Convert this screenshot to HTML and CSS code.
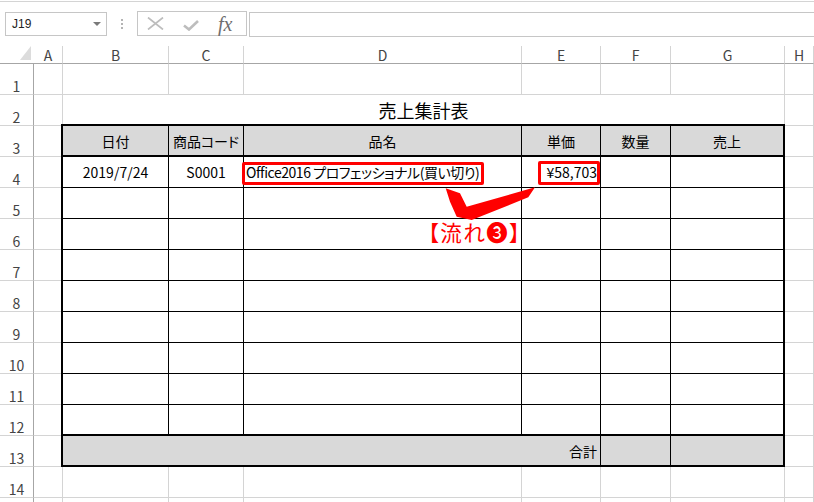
FILE: index.html
```html
<!DOCTYPE html>
<html lang="ja">
<head>
<meta charset="utf-8">
<title>売上集計表</title>
<link rel="stylesheet" href="styles.css">
</head>
<body>
<div class="fbar">
  <div class="namebox"><span class="nb-text">J19</span><span class="nb-arrow"></span></div>
  <div class="grip"><i></i><i></i><i></i></div>
  <div class="fnbox">
    <svg class="ic-x" width="17" height="13" viewBox="0 0 17 13"><path d="M1 0.5L16 12.5M16 0.5L1 12.5" stroke="#bdbdbd" stroke-width="1.7" fill="none"/></svg>
    <svg class="ic-ok" width="16" height="11" viewBox="0 0 16 11"><path d="M1 5.5L6 9.5L15 1" stroke="#bdbdbd" stroke-width="2.6" fill="none"/></svg>
    <span class="fx">fx</span>
  </div>
  <div class="finput"></div>
</div>

<div class="sheet">
  <div class="ch corner"><svg width="33" height="17" viewBox="0 0 33 17"><polygon points="31,0 31,14 20,14" fill="#dcdcdc"/></svg></div>
  <div class="ch">A</div><div class="ch">B</div><div class="ch">C</div><div class="ch">D</div><div class="ch">E</div><div class="ch">F</div><div class="ch">G</div><div class="ch">H</div>

  <div class="rh">1</div><div class="c"></div><div class="c"></div><div class="c"></div><div class="c"></div><div class="c"></div><div class="c"></div><div class="c"></div><div class="c"></div>
  <div class="rh">2</div><div class="c"></div><div class="c"></div>
  <div class="rh">3</div><div class="c"></div><div class="c"></div>
  <div class="rh">4</div><div class="c"></div><div class="c"></div>
  <div class="rh">5</div><div class="c"></div><div class="c"></div>
  <div class="rh">6</div><div class="c"></div><div class="c"></div>
  <div class="rh">7</div><div class="c"></div><div class="c"></div>
  <div class="rh">8</div><div class="c"></div><div class="c"></div>
  <div class="rh">9</div><div class="c"></div><div class="c"></div>
  <div class="rh">10</div><div class="c"></div><div class="c"></div>
  <div class="rh">11</div><div class="c"></div><div class="c"></div>
  <div class="rh">12</div><div class="c"></div><div class="c"></div>
  <div class="rh">13</div><div class="c"></div><div class="c"></div>
  <div class="rh">14</div><div class="c"></div><div class="c"></div><div class="c"></div><div class="c"></div><div class="c"></div><div class="c"></div><div class="c"></div><div class="c"></div>
  <div class="rh"></div><div class="c"></div><div class="c"></div><div class="c"></div><div class="c"></div><div class="c"></div><div class="c"></div><div class="c"></div><div class="c"></div>

  <div class="title">売上集計表</div>

  <div class="tbl">
    <div class="t hd">日付</div><div class="t hd">商品コード</div><div class="t hd">品名</div><div class="t hd">単価</div><div class="t hd">数量</div><div class="t hd last">売上</div>

    <div class="t">2019/7/24</div><div class="t">S0001</div>
    <div class="t left"><span class="name">Office2016 プロフェッショナル(買い切り)</span><span class="hl hl-name"></span></div>
    <div class="t right">¥58,703<span class="hl hl-price"></span></div>
    <div class="t"></div><div class="t last"></div>

    <div class="t"></div><div class="t"></div><div class="t"></div><div class="t"></div><div class="t"></div><div class="t last"></div>
    <div class="t"></div><div class="t"></div><div class="t"></div><div class="t"></div><div class="t"></div><div class="t last"></div>
    <div class="t"></div><div class="t"></div><div class="t"></div><div class="t"></div><div class="t"></div><div class="t last"></div>
    <div class="t"></div><div class="t"></div><div class="t"></div><div class="t"></div><div class="t"></div><div class="t last"></div>
    <div class="t"></div><div class="t"></div><div class="t"></div><div class="t"></div><div class="t"></div><div class="t last"></div>
    <div class="t"></div><div class="t"></div><div class="t"></div><div class="t"></div><div class="t"></div><div class="t last"></div>
    <div class="t"></div><div class="t"></div><div class="t"></div><div class="t"></div><div class="t"></div><div class="t last"></div>
    <div class="t b2"></div><div class="t b2"></div><div class="t b2"></div><div class="t b2"></div><div class="t b2"></div><div class="t b2 last"></div>

    <div class="t ft sum">合計</div><div class="t ft"></div><div class="t ft last"></div>
  </div>
</div>

<svg class="arrow" width="110" height="50" viewBox="440 180 110 50"><polygon points="445.7,188.3 460,193.3 466.7,206.7 535,187.3 528.3,197.3 471.7,220 456.7,216.7 450,201.7" fill="#ff0000"/></svg>
<div class="label">【流れ❸】</div>
</body>
</html>
```

FILE: styles.css
```css
* { box-sizing: border-box; }
html, body { margin: 0; padding: 0; }
body {
  width: 814px;
  height: 502px;
  overflow: hidden;
  position: relative;
  background: #fff;
  color: #000;
  font-family: "Noto Sans CJK JP", "Noto Sans", sans-serif;
}

/* formula bar */
.fbar {
  margin-top: 1px;
  border-top: 1px solid #d4d4d4;
  height: 45px;
  padding-top: 10px;
  display: flex;
  align-items: flex-start;
}
.namebox {
  margin-left: 5px;
  width: 102px;
  height: 24px;
  border: 1px solid #c6c6c6;
  display: flex;
  align-items: center;
  justify-content: space-between;
  padding: 0 5px 0 6px;
  font-family: "Liberation Sans", sans-serif;
  font-size: 12px;
  color: #222;
}
.nb-arrow {
  width: 0;
  height: 0;
  border-left: 4px solid transparent;
  border-right: 4px solid transparent;
  border-top: 4px solid #7a7a7a;
}
.grip {
  width: 30px;
  height: 24px;
  display: flex;
  flex-direction: column;
  align-items: center;
  justify-content: center;
  gap: 2px;
}
.grip i {
  display: block;
  width: 2px;
  height: 2px;
  background: #b4b4b4;
}
.fnbox {
  width: 110px;
  height: 25px;
  margin-top: -1px;
  border: 1px solid #c6c6c6;
  display: flex;
  align-items: center;
}
.ic-x { margin-left: 9px; display: block; }
.ic-ok { margin-left: 19px; margin-top: 3px; display: block; }
.fx {
  margin-left: 19px;
  font-family: "Liberation Serif", serif;
  font-style: italic;
  font-size: 20px;
  line-height: 1;
  color: #6e6e6e;
  margin-top: 1px;
}
.finput {
  flex: 1;
  margin-left: 2px;
  height: 25px;
  border: 1px solid #c6c6c6;
  border-right: none;
}

/* sheet grid */
.sheet {
  display: grid;
  grid-template-columns: 34px 29px 106px 75px 278px 79px 70px 114px 29px;
  grid-template-rows: 18px repeat(15, 31px);
}
.ch {
  border-right: 1px solid #d4d4d4;
  border-bottom: 1px solid #a6a6a6;
  display: flex;
  align-items: center;
  justify-content: center;
  font-size: 14px;
  line-height: 1;
  color: #444;
}
.corner { border-right: none; display: block; }
.corner svg { display: block; }
.rh {
  border-right: 1px solid #a6a6a6;
  border-bottom: 1px solid #d4d4d4;
  display: flex;
  align-items: flex-end;
  justify-content: center;
  font-size: 14px;
  line-height: 14px;
  padding-bottom: 1px;
  color: #444;
}
.c {
  border-right: 1px solid #d4d4d4;
  border-bottom: 1px solid #d4d4d4;
}
.title {
  grid-column: 3 / 9;
  grid-row: 3 / 4;
  border-right: 1px solid #d4d4d4;
  border-bottom: 1px solid #d4d4d4;
  display: flex;
  align-items: center;
  justify-content: center;
  font-size: 18px;
  line-height: 1;
}

/* data table */
.tbl {
  grid-column: 3 / 9;
  grid-row: 4 / 15;
  margin: -2px 0 0 -2px;
  border: 2px solid #000;
  background: #fff;
  display: grid;
  grid-template-columns: 106px 75px 278px 79px 70px 1fr;
  grid-template-rows: repeat(10, 31px) 1fr;
  font-size: 14px;
  line-height: 1;
  font-feature-settings: "palt";
}
.t {
  border-right: 1px solid #000;
  border-bottom: 1px solid #000;
  display: flex;
  align-items: center;
  justify-content: center;
  white-space: nowrap;
}
.t.last { border-right: none; }
.t.hd { background: #d9d9d9; border-bottom-width: 2px; }
.t.b2 { border-bottom-width: 2px; }
.t.ft { background: #d9d9d9; border-bottom: none; }
.t.sum { grid-column: span 4; justify-content: flex-end; padding-right: 3px; }
.t.left { justify-content: flex-start; padding-left: 2px; position: relative; }
.t.right { justify-content: flex-end; padding-right: 3px; position: relative; }
.name { letter-spacing: -0.45px; }

.hl {
  position: absolute;
  border: 3px solid #ff0000;
  border-radius: 2px;
}
.hl-name { left: -2px; top: 5px; width: 242px; height: 23px; }
.hl-price { left: 16px; top: 4px; width: 62px; height: 24px; }

/* annotation */
.arrow {
  position: absolute;
  left: 440px;
  top: 180px;
  display: block;
}
.label {
  position: absolute;
  left: 428px;
  top: 221px;
  font-size: 21.5px;
  line-height: 1;
  letter-spacing: 1.5px;
  color: #ff0000;
  white-space: nowrap;
  font-feature-settings: "palt";
}
```
